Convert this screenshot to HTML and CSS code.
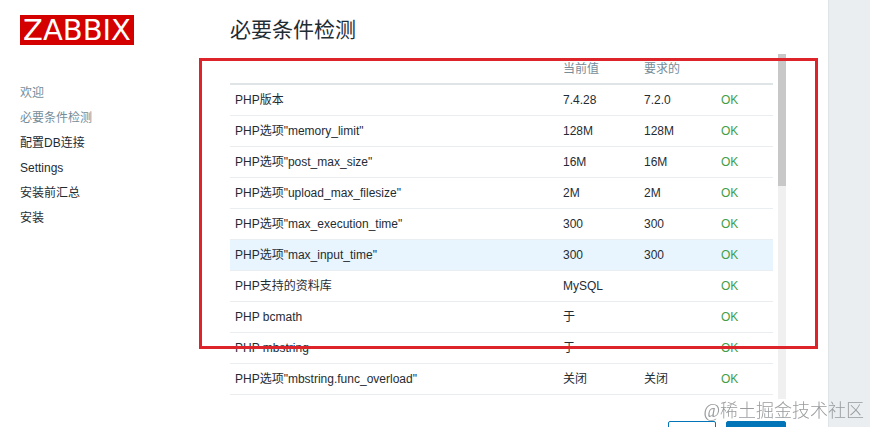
FILE: index.html
```html
<!DOCTYPE html>
<html lang="zh-CN">
<head>
    <meta charset="UTF-8">
    <meta name="viewport" content="width=device-width, initial-scale=1.0">
    <title>Zabbix 安装</title>
    <link rel="stylesheet" href="styles.css">
</head>
<body>
    <div class="setup">
        <div class="setup-left">
            <div class="logo">ZABBIX</div>
            <ul class="steps">
                <li class="done">欢迎</li>
                <li class="done">必要条件检测</li>
                <li>配置DB连接</li>
                <li>Settings</li>
                <li>安装前汇总</li>
                <li>安装</li>
            </ul>
        </div>

        <div class="setup-right">
            <h1>必要条件检测</h1>

            <div class="requirements">
                <table class="list-table">
                    <thead>
                        <tr><th class="col-name"></th><th class="col-current">当前值</th><th class="col-required">要求的</th><th class="col-status"></th></tr>
                    </thead>
                    <tbody>
                        <tr><td>PHP版本</td><td>7.4.28</td><td>7.2.0</td><td class="ok">OK</td></tr>
                        <tr><td>PHP选项"memory_limit"</td><td>128M</td><td>128M</td><td class="ok">OK</td></tr>
                        <tr><td>PHP选项"post_max_size"</td><td>16M</td><td>16M</td><td class="ok">OK</td></tr>
                        <tr><td>PHP选项"upload_max_filesize"</td><td>2M</td><td>2M</td><td class="ok">OK</td></tr>
                        <tr><td>PHP选项"max_execution_time"</td><td>300</td><td>300</td><td class="ok">OK</td></tr>
                        <tr class="selected"><td>PHP选项"max_input_time"</td><td>300</td><td>300</td><td class="ok">OK</td></tr>
                        <tr><td>PHP支持的资料库</td><td>MySQL</td><td></td><td class="ok">OK</td></tr>
                        <tr><td>PHP bcmath</td><td>于</td><td></td><td class="ok">OK</td></tr>
                        <tr><td>PHP mbstring</td><td>于</td><td></td><td class="ok">OK</td></tr>
                        <tr><td>PHP选项"mbstring.func_overload"</td><td>关闭</td><td>关闭</td><td class="ok">OK</td></tr>
                    </tbody>
                </table>
                <div class="scrollbar"><div class="scrollbar-thumb"></div></div>
                <div class="highlight-box"></div>
            </div>

            <div class="setup-footer">
                <button type="button" class="btn-alt">返回</button>
                <button type="button" class="btn-main">下一步</button>
            </div>
        </div>
    </div>

    <div class="watermark">@稀土掘金技术社区</div>
</body>
</html>
```
FILE: styles.css
```css
* {
    box-sizing: border-box;
}

body {
    margin: 0;
    min-height: 100vh;
    background-color: #ebeef0;
    color: #1f2c33;
    font-family: "Liberation Sans", "Noto Sans CJK SC", sans-serif;
    font-size: 12px;
}

.setup {
    display: flex;
    min-height: 100vh;
    margin-right: 41px;
    padding: 15px 42px 30px 20px;
    background-color: #fff;
    border-right: 1px solid #dfe4e7;
}

.setup-left {
    flex: 0 0 210px;
}

.logo {
    width: 114px;
    height: 30px;
    background-color: #d40000;
    color: #fff;
    font-family: "DejaVu Sans", sans-serif;
    font-size: 29px;
    line-height: 30px;
    text-align: center;
}

.steps {
    list-style: none;
    margin: 36px 0 0;
    padding: 0;
    line-height: 25px;
}

.steps .done {
    color: #768d99;
}

.setup-right {
    flex: 1;
    min-width: 0;
}

h1 {
    margin: 0 0 9px;
    font-size: 21px;
    font-weight: normal;
    line-height: 30px;
}

.requirements {
    position: relative;
    display: flex;
    gap: 5px;
}

.list-table {
    flex: 1;
    align-self: flex-start;
    table-layout: fixed;
    border-collapse: separate;
    border-spacing: 0;
    margin-bottom: 4px;
}

.list-table th,
.list-table td {
    height: 31px;
    padding: 0 5px;
    text-align: left;
    font-weight: normal;
    line-height: 18px;
    white-space: nowrap;
    border-bottom: 1px solid #ebeef0;
}

.list-table th {
    color: #768d99;
    border-bottom: 2px solid #dfe4e7;
}

.col-current {
    width: 81px;
}

.col-required {
    width: 77px;
}

.col-status {
    width: 57px;
}

.list-table .selected td {
    background-color: #e8f5ff;
}

.list-table .ok {
    color: #429e47;
}

.scrollbar {
    flex: 0 0 8px;
    background-color: #f0f0f0;
}

.scrollbar-thumb {
    height: 132px;
    background-color: #c8c8c8;
}

.highlight-box {
    position: absolute;
    top: 4px;
    left: -31px;
    right: -32px;
    height: 291px;
    border: 3px solid #dc242a;
    pointer-events: none;
}

.setup-footer {
    display: flex;
    justify-content: flex-end;
    gap: 10px;
    margin-top: 22px;
}

.setup-footer button {
    height: 36px;
    padding: 0 11px;
    border: 1px solid #0275b8;
    border-radius: 2px;
    font-family: inherit;
    font-size: 12px;
    cursor: pointer;
}

.setup-footer .btn-alt {
    width: 48px;
    background-color: #fff;
    color: #0275b8;
}

.setup-footer .btn-main {
    width: 60px;
    background-color: #0275b8;
    color: #fff;
}

.watermark {
    position: fixed;
    right: 6px;
    bottom: 4px;
    color: #999b9d;
    font-family: "Liberation Serif", "Noto Sans CJK SC", serif;
    font-size: 18px;
    font-weight: 300;
    line-height: 24px;
}
```
